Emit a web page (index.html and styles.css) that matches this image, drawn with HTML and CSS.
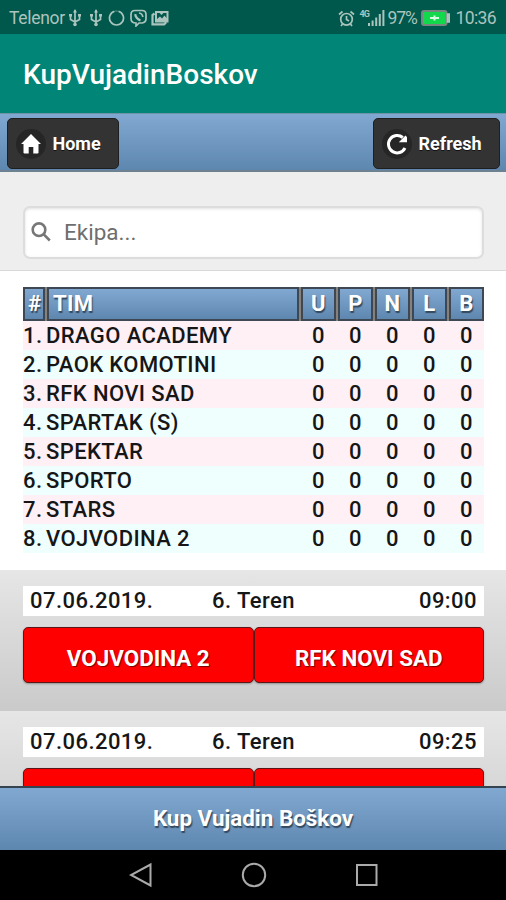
FILE: index.html
```html
<!DOCTYPE html>
<html lang="sr">
<head>
  <meta charset="UTF-8">
  <meta name="viewport" content="width=device-width, initial-scale=1.0">
  <title>KupVujadinBoskov</title>
  <link rel="stylesheet" href="styles.css">
</head>
<body>
  <div class="status-bar">
    <div class="status-left">
      <span class="carrier">Telenor</span>
      <svg class="usb" width="12" height="18" viewBox="0 0 12 18"><path d="M6 1v14M1.500 6v4.500L6 13l4.500-2.500V6"/><path class="fill" d="M6 0l2 3.500H4zM0 5h3v2.500H0zM9 5h3v2.500H9z"/><circle class="fill" cx="6" cy="15.500" r="1.800"/></svg>
      <svg class="usb second" width="12" height="18" viewBox="0 0 12 18"><path d="M6 1v14M1.500 6v4.500L6 13l4.500-2.500V6"/><path class="fill" d="M6 0l2 3.500H4zM0 5h3v2.500H0zM9 5h3v2.500H9z"/><circle class="fill" cx="6" cy="15.500" r="1.800"/></svg>
      <svg class="ring" width="17" height="18" viewBox="0 0 17 18"><path d="M10.500 2.300A7 7 0 1 1 6.500 2.300"/><path d="M7.300 2.100h2.400" stroke-opacity="0.35"/></svg>
      <svg class="viber" width="17" height="18" viewBox="0 0 17 18"><path d="M5 1.500h7q4 0 4 4v4q0 4-4 4.500H9l-3 3v-3Q1 14 1 9.500v-4q0-4 4-4z"/><path class="thick" d="M5.500 5q-.5 1.500 1 3.500t4 3"/><path d="M9 4q3.500.500 3.800 4"/></svg>
      <svg class="gallery" width="18" height="16" viewBox="0 0 18 16"><path class="thick" d="M3.500 3.500L1.500 5v9.300h11.700l2-2"/><path class="fill" fill-rule="evenodd" d="M4 1h13.500v11.500H4zM6 3v6l3-2.500 2 2 2.500-3 2 2.500V3h-3l-2 2-2-2z"/></svg>
    </div>
    <div class="status-right">
      <svg class="alarm" width="17" height="17" viewBox="0 0 17 17"><circle cx="8.500" cy="9.300" r="5.800"/><path d="M8.500 6v3.500l2.500 1.500M1 4.500L4.500 1.500M16 4.500L12.500 1.500M4.500 14L3 16M12.500 14l1.500 2"/></svg>
      <div class="network">
        <span>4G</span>
        <svg width="17" height="16" viewBox="0 0 17 16"><path class="fill" d="M0 13h2v3H0zM3.600 10.500h2V16h-2zM7.200 7.500h2V16h-2zM10.800 4h2v12h-2zM14.400 0h2v16h-2z"/></svg>
      </div>
      <span class="percent">97%</span>
      <svg class="battery" width="29" height="16" viewBox="0 0 29 16"><rect x="1" y="1" width="24.500" height="14" rx="2" fill="#12d84c" stroke="#75877f" stroke-width="2"/><path fill="#a4bcb5" d="M26.500 4h2v8h-2z"/><path stroke="#d6ffdf" stroke-width="2" d="M9 8h9M13.500 5.500v5"/></svg>
      <span class="clock">10:36</span>
    </div>
  </div>

  <div class="app-bar">KupVujadinBoskov</div>

  <header class="header">
    <a href="#" class="btn home-btn">
      <svg width="24" height="24" viewBox="0 0 24 24"><path fill="#fff" d="M12 2L2 12h2.500v9.500h5.200V15h4.600v6.500h5.200V12H22z"/></svg>
      <span>Home</span>
    </a>
    <a href="#" class="btn refresh-btn">
      <svg width="24" height="24" viewBox="0 0 24 24"><path fill="none" stroke="#fff" stroke-width="3" d="M20 16A8.700 8.700 0 1 1 17.800 5.500"/><path fill="#fff" d="M22 2v8.200h-8.200z"/></svg>
      <span>Refresh</span>
    </a>
  </header>

  <main>
    <section class="search">
      <div class="search-box">
        <svg width="20" height="20" viewBox="0 0 20 20"><circle cx="8" cy="7.700" r="6.300"/><path d="M12.500 12.200l6.300 6.300"/></svg>
        <span>Ekipa...</span>
      </div>
    </section>

    <section class="standings">
      <div class="row head"><span>#</span><span>TIM</span><span>U</span><span>P</span><span>N</span><span>L</span><span>B</span></div>
      <div class="row"><span>1.</span><span>DRAGO ACADEMY</span><span>0</span><span>0</span><span>0</span><span>0</span><span>0</span></div>
      <div class="row"><span>2.</span><span>PAOK KOMOTINI</span><span>0</span><span>0</span><span>0</span><span>0</span><span>0</span></div>
      <div class="row"><span>3.</span><span>RFK NOVI SAD</span><span>0</span><span>0</span><span>0</span><span>0</span><span>0</span></div>
      <div class="row"><span>4.</span><span>SPARTAK (S)</span><span>0</span><span>0</span><span>0</span><span>0</span><span>0</span></div>
      <div class="row"><span>5.</span><span>SPEKTAR</span><span>0</span><span>0</span><span>0</span><span>0</span><span>0</span></div>
      <div class="row"><span>6.</span><span>SPORTO</span><span>0</span><span>0</span><span>0</span><span>0</span><span>0</span></div>
      <div class="row"><span>7.</span><span>STARS</span><span>0</span><span>0</span><span>0</span><span>0</span><span>0</span></div>
      <div class="row"><span>8.</span><span>VOJVODINA 2</span><span>0</span><span>0</span><span>0</span><span>0</span><span>0</span></div>
    </section>

    <section class="match">
      <div class="match-info"><span>07.06.2019.</span><span>6. Teren</span><span>09:00</span></div>
      <div class="teams">
        <a href="#" class="team">VOJVODINA 2</a>
        <a href="#" class="team">RFK NOVI SAD</a>
      </div>
    </section>
    <section class="match">
      <div class="match-info"><span>07.06.2019.</span><span>6. Teren</span><span>09:25</span></div>
      <div class="teams">
        <a href="#" class="team"></a>
        <a href="#" class="team"></a>
      </div>
    </section>
  </main>

  <footer class="footer">Kup Vujadin Boškov</footer>

  <nav class="nav-bar">
    <svg width="24" height="26" viewBox="0 0 24 26"><path d="M21.500 2.500v21L2 13z"/></svg>
    <svg width="26" height="26" viewBox="0 0 26 26"><circle cx="13" cy="13" r="11.200"/></svg>
    <svg width="24" height="26" viewBox="0 0 24 26"><rect x="2" y="3" width="19.500" height="20"/></svg>
  </nav>
</body>
</html>
```
FILE: styles.css
```css
* {
  margin: 0;
  padding: 0;
  box-sizing: border-box;
}
body {
  font-family: Roboto, sans-serif;
  width: 506px;
  height: 900px;
  overflow: hidden;
  display: flex;
  flex-direction: column;
  background: #fff;
  color: #161616;
}
a {
  text-decoration: none;
}
svg {
  flex: none;
  display: block;
}
.status-bar {
  height: 34px;
  background: #00574b;
  color: #abc4bd;
  display: flex;
  justify-content: space-between;
  align-items: center;
  padding: 2px 10px 0 9px;
  font-size: 17.5px;
}
.status-left,
.status-right {
  display: flex;
  align-items: center;
}
.status-bar svg {
  fill: none;
  stroke: #abc4bd;
  stroke-width: 1.7;
}
.status-bar .fill {
  fill: #abc4bd;
  stroke: none;
}
.status-bar .thick {
  stroke-width: 2.2;
}
.carrier {
  width: 60px;
  letter-spacing: -0.3px;
}
.second {
  margin-left: 9px;
}
.ring {
  margin-left: 6px;
}
.viber {
  margin-left: 5px;
}
.gallery {
  margin-left: 4px;
}
.network {
  display: flex;
  align-items: flex-start;
  margin-left: 4px;
}
.network span {
  font-size: 9px;
  line-height: 8px;
  font-weight: 700;
  width: 10px;
  letter-spacing: -0.8px;
}
.network svg {
  margin-left: -1px;
}
.percent {
  width: 31px;
  margin-left: 2px;
  letter-spacing: -1px;
}
.battery {
  margin-left: 3px;
}
.clock {
  margin-left: 5px;
  letter-spacing: -0.6px;
}
.app-bar {
  height: 79px;
  background: #008577;
  color: #fff;
  font-size: 28px;
  font-weight: 500;
  line-height: 82px;
  padding-left: 23px;
}
.header {
  height: 59px;
  background: linear-gradient(#81a8d0, #5e87b0);
  border-top: 1px solid #6d93a8;
  border-bottom: 2px solid #6e8190;
  display: flex;
  justify-content: space-between;
  padding: 4px 6px 0 7px;
}
.btn {
  height: 51px;
  background: #333;
  border: 1px solid #1f1f1f;
  border-radius: 5px;
  color: #fff;
  font-size: 18px;
  font-weight: 700;
  text-shadow: 0 1px 0 #111;
  display: flex;
  align-items: center;
  padding-left: 11px;
}
.btn svg {
  background: #262626;
  border-radius: 50%;
  box-shadow: 0 0 0 3px #262626;
}
.btn span {
  margin-left: 9.5px;
  margin-top: -1px;
}
.home-btn {
  width: 112px;
}
.refresh-btn {
  width: 127px;
}
.search {
  height: 99px;
  background: #eee;
  border-bottom: 1px solid #d9d9d9;
  padding: 34px 22px 0 23px;
}
.search-box {
  height: 53px;
  background: #fff;
  border: 2px solid #ddd;
  border-radius: 7px;
  box-shadow: inset 0 1px 3px rgba(0, 0, 0, 0.12);
  display: flex;
  align-items: center;
  padding: 0 0 2px 6px;
  font-size: 22.5px;
  color: #6e6e6e;
}
.search-box svg {
  fill: none;
  stroke: #777;
  stroke-width: 2.6;
}
.search-box span {
  margin-left: 13px;
}
main {
  flex: 1;
  overflow: hidden;
}
.standings {
  padding: 16px 22px 17px 23px;
}
.row {
  display: grid;
  grid-template-columns: 22px 252px repeat(5, 35px);
  column-gap: 2px;
  height: 29px;
  line-height: 29px;
  font-size: 22px;
  font-weight: 500;
  letter-spacing: 0.4px;
  background: #effffe;
}
.row:nth-child(even) {
  background: #fff0f5;
}
.row span {
  text-align: center;
  white-space: nowrap;
}
.row span:nth-child(-n+2) {
  text-align: left;
}
.row:not(.head) span:nth-child(2) {
  margin-left: -1px;
}
.row.head {
  height: 34px;
  background: #85827e;
  color: #fff;
  font-weight: 700;
  text-shadow: 1px 2px 1px #33485d;
}
.head span {
  background: linear-gradient(#81a8d0, #5e87b0);
  border: 2px solid #3d4854;
}
.head span:nth-child(1) {
  padding-left: 3px;
}
.head span:nth-child(2) {
  padding-left: 4px;
}
.match {
  height: 141px;
  background: linear-gradient(#e6e6e6, #cacaca);
  padding: 16px 22px 0 23px;
}
.match-info {
  height: 30px;
  background: #fff;
  padding: 0 7px;
  display: grid;
  grid-template-columns: 182px 1fr auto;
  font-size: 22px;
  font-weight: 500;
  line-height: 30px;
  letter-spacing: 0.45px;
}
.teams {
  display: flex;
  margin-top: 11px;
}
.team {
  flex: 1;
  height: 56px;
  background: #f00;
  border: 1px solid #5b1717;
  border-radius: 5px;
  box-shadow: 0 1px 2px rgba(0, 0, 0, 0.3);
  color: #fff;
  font-size: 22.4px;
  font-weight: 700;
  line-height: 61px;
  text-align: center;
  text-shadow: 1px 1px 1px #700;
}
.footer {
  height: 64px;
  background: linear-gradient(#81a8d0, #5e87b0);
  border-top: 2px solid #35424f;
  color: #fff;
  font-size: 22.4px;
  font-weight: 700;
  line-height: 60px;
  text-align: center;
  text-shadow: 1px 2px 1px #33485d;
}
.nav-bar {
  height: 50px;
  background: #000;
  display: flex;
  justify-content: center;
  align-items: center;
  gap: 88px;
  padding-left: 1px;
}
.nav-bar svg {
  fill: none;
  stroke: #aaa;
  stroke-width: 2;
}
```
